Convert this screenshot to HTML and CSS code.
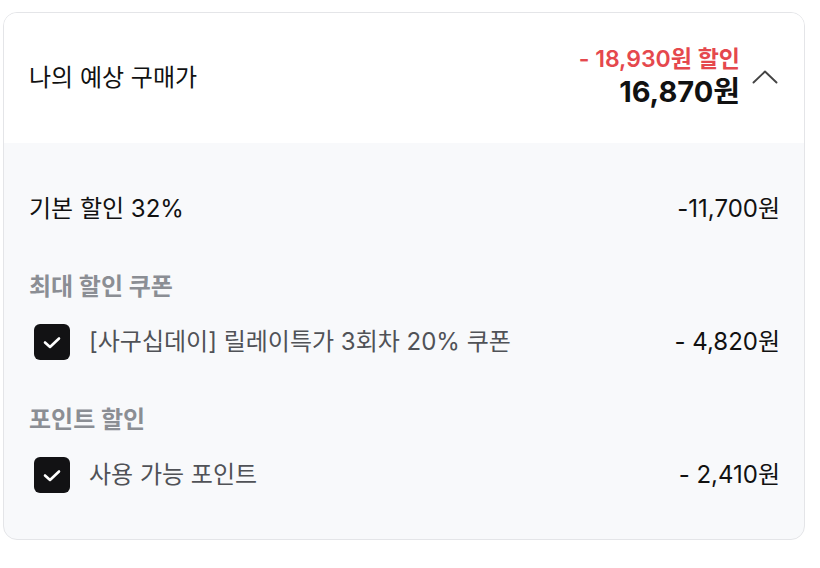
FILE: index.html
```html
<!DOCTYPE html>
<html lang="ko">
<head>
<meta charset="utf-8">
<title>나의 예상 구매가</title>
<link rel="stylesheet" href="styles.css">
</head>
<body>

<div class="price_box">
	<div class="price_head">
		<h2 class="price_title">나의 예상 구매가</h2>
		<div class="price_sum">
			<div class="price_total">
				<p class="price_saved">- 18,930원 할인</p>
				<p class="price_final">16,870원</p>
			</div>
			<svg class="price_toggle" width="26" height="14" viewBox="0 0 26 14" fill="none">
				<path d="M1.5 12.5 L13 1.5 L24.5 12.5" stroke="#444" stroke-width="1.9" stroke-linecap="round" stroke-linejoin="round"/>
			</svg>
		</div>
	</div>

	<div class="price_body">
		<div class="row">
			<span class="row_name">기본 할인 32%</span>
			<span class="row_val">-11,700원</span>
		</div>

		<h3 class="group_title">최대 할인 쿠폰</h3>
		<div class="row">
			<label class="row_check">
				<span class="check"><svg width="18" height="13" viewBox="0 0 18 13" fill="none"><path d="M2 6.5 L7 11 L16 2.5" stroke="#fff" stroke-width="2.6" stroke-linecap="round" stroke-linejoin="round"/></svg></span>
				<span class="row_sub">[사구십데이] 릴레이특가 3회차 20% 쿠폰</span>
			</label>
			<span class="row_val">- 4,820원</span>
		</div>

		<h3 class="group_title">포인트 할인</h3>
		<div class="row">
			<label class="row_check">
				<span class="check"><svg width="18" height="13" viewBox="0 0 18 13" fill="none"><path d="M2 6.5 L7 11 L16 2.5" stroke="#fff" stroke-width="2.6" stroke-linecap="round" stroke-linejoin="round"/></svg></span>
				<span class="row_sub">사용 가능 포인트</span>
			</label>
			<span class="row_val">- 2,410원</span>
		</div>
	</div>
</div>

</body>
</html>
```

FILE: styles.css
```css
/* Reset */
* {
	margin:0;
	padding:0;
	box-sizing:border-box;
}
body {
	background:#FFF;
	color:#111;
	font:24px/34px Inter, "Noto Sans CJK KR", sans-serif;
	padding:12px 15px 0 3px;
}
h2, h3 {
	font-size:1em;
	font-weight:normal;
}

/* Price box */
.price_box {
	width:802px;
	height:528px;
	border:1px solid #E4E5E8;
	border-radius:14px;
	overflow:hidden;
	background:#F8F9FB;
}
.price_head {
	display:flex;
	align-items:center;
	justify-content:space-between;
	height:130px;
	padding:0 26px 0 25px;
	background:#FFF;
}
.price_sum {
	display:flex;
	align-items:center;
	gap:12px;
}
.price_total {
	text-align:right;
}
.price_saved {
	color:#E5484D;
	font-size:23px;
	font-weight:600;
	line-height:28px;
}
.price_final {
	font-size:29px;
	font-weight:700;
	line-height:38px;
}
.price_toggle {
	margin-top:-2px;
}

/* Discount rows */
.price_body {
	padding:46px 24px 0 25px;
}
.row {
	display:flex;
	align-items:center;
	justify-content:space-between;
	height:40px;
}
.row_check {
	display:flex;
	align-items:center;
	gap:19px;
	padding-left:5px;
}
.check {
	display:flex;
	align-items:center;
	justify-content:center;
	width:36px;
	height:36px;
	border-radius:6px;
	background:#121214;
}
.row_sub {
	color:#505257;
}
.group_title {
	margin:41px 0 18px;
	color:#8B8E94;
	font-weight:700;
}
```
